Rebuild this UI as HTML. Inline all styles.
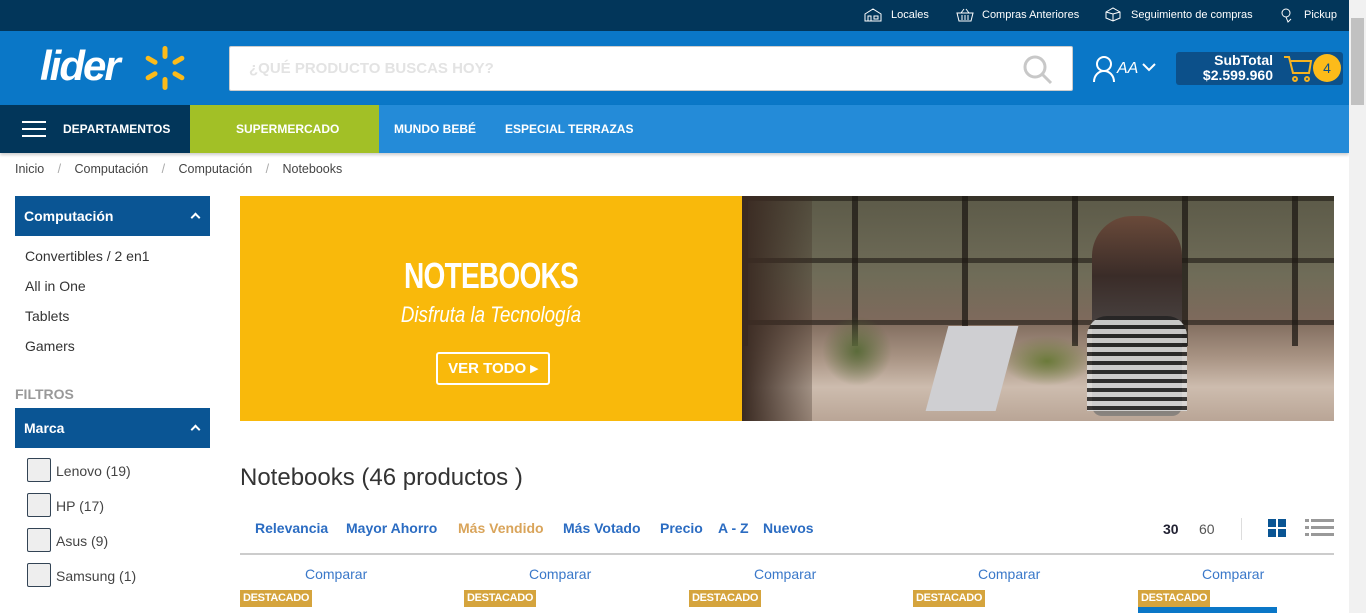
<!DOCTYPE html>
<html><head><meta charset="utf-8"><style>
*{box-sizing:border-box;margin:0;padding:0}
body{width:1366px;height:613px;overflow:hidden;font-family:"Liberation Sans",sans-serif;background:#fff;position:relative}
.a{position:absolute}
.top{left:0;top:0;width:1349px;height:31px;background:#02365a;color:#fff;font-size:11px}
.top span{position:absolute;top:9px}
.hdr{left:0;top:31px;width:1349px;height:74px;background:#0a77c7}
.nav{left:0;top:105px;width:1349px;height:48px;background:#248bd8;color:#fff;font-weight:bold;font-size:12px;box-shadow:0 2px 3px rgba(0,0,0,.2)}
.nav span{position:absolute;top:17px}
.sb{right:0;top:0;width:17px;height:613px;background:#f1f1f1}
.crumb{top:162px;font-size:12.5px;color:#444;word-spacing:1px}
.sh{left:15px;width:195px;height:40px;background:#0a5594;color:#fff;font-weight:bold;font-size:14px;padding:12px 9px}
.sh i{position:absolute;right:11px;top:18px;width:7px;height:7px;border-left:2px solid #fff;border-top:2px solid #fff;transform:rotate(45deg)}
.li{left:25px;font-size:14px;color:#333}
.cb{left:27px;width:24px;height:24px;border:1px solid #345;border-radius:2px;background:#eee}
.cl{left:56px;font-size:14px;color:#444}
.sort{top:520px;font-size:14px;font-weight:bold;color:#2b6cc2}
.cmp{top:566px;font-size:14px;color:#3a78c9}
.dst{top:590px;height:17px;background:#d5a43d;color:#fff;font-size:11px;font-weight:bold;padding:2px 3px;letter-spacing:-.3px}
</style></head><body>
<div class="a top">
<svg class="a" style="left:864px;top:8px" width="18" height="14" viewBox="0 0 18 14" fill="none" stroke="#fff" stroke-width="1"><path d="M1 6L9 1l8 5v7H1z M4 8h3v5H4z M10 8h4v3h-4z"/></svg>
<span style="left:891px">Locales</span>
<svg class="a" style="left:956px;top:8px" width="18" height="14" viewBox="0 0 18 14" fill="none" stroke="#fff"><path d="M1 5h16l-2 8H3z M5 5L8 1 M13 5l-3-4 M6 7v5 M9 7v5 M12 7v5"/></svg>
<span style="left:982px">Compras Anteriores</span>
<svg class="a" style="left:1104px;top:7px" width="18" height="15" viewBox="0 0 18 15" fill="none" stroke="#fff"><path d="M2 5l7-4 7 4v6l-7 3-7-3z M9 7v7 M2 5l7 2 7-2"/></svg>
<span style="left:1131px">Seguimiento de compras</span>
<svg class="a" style="left:1280px;top:7px" width="14" height="16" viewBox="0 0 14 16" fill="none" stroke="#fff"><circle cx="6" cy="6" r="4"/><path d="M6 10l2 5 3-3"/></svg>
<span style="left:1304px">Pickup</span>
</div>
<div class="a hdr">
<div class="a" style="left:40px;top:11px;color:#fff;font-size:42px;font-style:italic;font-weight:bold;letter-spacing:-2px">lider</div>
<svg class="a" style="left:140px;top:12px" width="50" height="50" viewBox="-25 -25 50 50"><g fill="#fcbb1a"><rect x="-2.5" y="-22" width="5" height="13" rx="2.5"/><rect x="-2.5" y="-22" width="5" height="13" rx="2.5" transform="rotate(60)"/><rect x="-2.5" y="-22" width="5" height="13" rx="2.5" transform="rotate(120)"/><rect x="-2.5" y="-22" width="5" height="13" rx="2.5" transform="rotate(180)"/><rect x="-2.5" y="-22" width="5" height="13" rx="2.5" transform="rotate(240)"/><rect x="-2.5" y="-22" width="5" height="13" rx="2.5" transform="rotate(300)"/></g></svg>
<div class="a" style="left:229px;top:15px;width:844px;height:45px;background:#fff;border:1px solid #ccc;border-radius:2px"><span class="a" style="left:19px;top:13px;font-size:15px;font-weight:bold;color:#e3e3e3">¿QUÉ PRODUCTO BUSCAS HOY?</span>
<svg class="a" style="left:792px;top:7px" width="32" height="32" viewBox="0 0 32 32" fill="none" stroke="#c8c8c8" stroke-width="3"><circle cx="13" cy="13" r="10"/><path d="M20 20l9 9"/></svg></div>
<svg class="a" style="left:1092px;top:24px" width="24" height="28" viewBox="0 0 24 28" fill="none" stroke="#fff" stroke-width="2"><circle cx="12" cy="9" r="7"/><path d="M2 27c0-7 5-11 10-11s10 4 10 11"/></svg>
<span class="a" style="left:1117px;top:29px;color:#fff;font-size:16px;font-style:italic">AA</span>
<svg class="a" style="left:1142px;top:32px" width="14" height="9" viewBox="0 0 14 9" fill="none" stroke="#fff" stroke-width="2"><path d="M1 1l6 6 6-6"/></svg>
<div class="a" style="left:1176px;top:21px;width:167px;height:33px;background:#0c508a;border-radius:3px"></div>
<div class="a" style="left:1195px;top:22px;width:78px;color:#fff;font-weight:bold;font-size:14px;text-align:right;line-height:15px">SubTotal<br>$2.599.960</div>
<svg class="a" style="left:1283px;top:24px" width="30" height="28" viewBox="0 0 30 28" fill="none" stroke="#f7b31f" stroke-width="2"><path d="M1 2h5l4 16h16l2-12H8"/><circle cx="12" cy="24" r="2"/><circle cx="24" cy="24" r="2"/></svg>
<div class="a" style="left:1313px;top:23px;width:28px;height:28px;border-radius:50%;background:#fcbb1a;color:#0c508a;font-size:14px;text-align:center;line-height:28px">4</div>
</div>
<div class="a nav">
<div class="a" style="left:0;top:0;width:190px;height:48px;background:#02365a"></div>
<div class="a" style="left:22px;top:16px;width:24px;height:2px;background:#fff;box-shadow:0 7px #fff,0 14px #fff"></div>
<span style="left:63px">DEPARTAMENTOS</span>
<div class="a" style="left:190px;top:0;width:189px;height:48px;background:#a2c026"></div>
<span style="left:236px">SUPERMERCADO</span>
<span style="left:394px">MUNDO BEBÉ</span>
<span style="left:505px">ESPECIAL TERRAZAS</span>
</div>
<div class="a sb"><div class="a" style="left:2px;top:18px;width:13px;height:87px;background:#c1c1c1"></div></div>
<span class="a crumb" style="left:15px">Inicio &nbsp;&nbsp;<span style="color:#aaa">/</span>&nbsp;&nbsp; Computación &nbsp;&nbsp;<span style="color:#aaa">/</span>&nbsp;&nbsp; Computación &nbsp;&nbsp;<span style="color:#aaa">/</span>&nbsp;&nbsp; Notebooks</span>
<div class="a sh" style="top:196px">Computación<i></i></div>
<span class="a li" style="top:248px">Convertibles / 2 en1</span>
<span class="a li" style="top:278px">All in One</span>
<span class="a li" style="top:308px">Tablets</span>
<span class="a li" style="top:338px">Gamers</span>
<span class="a" style="left:15px;top:386px;font-size:14px;font-weight:bold;color:#999">FILTROS</span>
<div class="a sh" style="top:408px">Marca<i></i></div>
<div class="a cb" style="top:458px"></div><span class="a cl" style="top:463px">Lenovo (19)</span>
<div class="a cb" style="top:493px"></div><span class="a cl" style="top:498px">HP (17)</span>
<div class="a cb" style="top:528px"></div><span class="a cl" style="top:533px">Asus (9)</span>
<div class="a cb" style="top:563px"></div><span class="a cl" style="top:568px">Samsung (1)</span>
<div class="a" style="left:240px;top:196px;width:502px;height:225px;background:#f9b90b"></div>
<div class="a" style="left:742px;top:196px;width:592px;height:225px;overflow:hidden;background:linear-gradient(180deg,#5c5a48 0%,#6f6c58 35%,#7e6a5c 55%,#a99484 72%,#cdbcae 85%,#b9a596 100%)">
<div class="a" style="left:0;top:0;width:592px;height:150px;background:repeating-linear-gradient(90deg,rgba(30,25,20,.75) 0 6px,rgba(0,0,0,0) 6px 110px)"></div>
<div class="a" style="left:0;top:0;width:592px;height:150px;background:repeating-linear-gradient(180deg,rgba(30,25,20,.6) 0 5px,rgba(0,0,0,0) 5px 62px)"></div>
<div class="a" style="left:0;top:0;width:70px;height:225px;background:linear-gradient(90deg,#3a2a22,rgba(60,45,35,.3))"></div>
<div class="a" style="left:80px;top:120px;width:70px;height:70px;border-radius:50%;background:radial-gradient(#5b6b3a,rgba(80,90,50,0) 70%)"></div>
<div class="a" style="left:260px;top:140px;width:90px;height:50px;border-radius:50%;background:radial-gradient(#6b7a3a,rgba(80,90,50,0) 70%)"></div>
<div class="a" style="left:195px;top:130px;width:70px;height:85px;background:#cfcfd2;transform:skewX(-15deg)"></div>
<div class="a" style="left:350px;top:20px;width:90px;height:200px;background:linear-gradient(180deg,#6a4a3a 0%,#3a2c28 30%,#4b4645 60%,#8a8580 100%);border-radius:40px 40px 10px 10px"></div>
<div class="a" style="left:345px;top:120px;width:100px;height:95px;background:repeating-linear-gradient(180deg,#222 0 4px,#ddd 4px 9px);border-radius:20px 20px 0 0;opacity:.85"></div>
</div>
<div class="a" style="left:240px;top:255px;width:502px;text-align:center;color:#fff;font-size:36px;font-weight:bold;transform:scaleX(.78);letter-spacing:-1px">NOTEBOOKS</div>
<div class="a" style="left:240px;top:302px;width:502px;text-align:center;color:#fff;font-size:22px;font-style:italic;transform:scaleX(.85)">Disfruta la Tecnología</div>
<div class="a" style="left:436px;top:352px;width:114px;height:33px;border:2px solid #fff;border-radius:3px;color:#fff;font-weight:bold;font-size:15px;text-align:center;line-height:29px">VER TODO ▸</div>
<span class="a" style="left:240px;top:464px;font-size:24px;color:#333">Notebooks (46 productos )</span>
<span class="a sort" style="left:255px">Relevancia</span>
<span class="a sort" style="left:346px">Mayor Ahorro</span>
<span class="a sort" style="left:458px;color:#d9a45a">Más Vendido</span>
<span class="a sort" style="left:563px">Más Votado</span>
<span class="a sort" style="left:660px">Precio</span>
<span class="a sort" style="left:718px">A - Z</span>
<span class="a sort" style="left:763px">Nuevos</span>
<span class="a" style="left:1163px;top:521px;font-size:14px;font-weight:bold;color:#223">30</span>
<span class="a" style="left:1199px;top:521px;font-size:14px;color:#555">60</span>
<div class="a" style="left:1241px;top:518px;width:1px;height:22px;background:#ddd"></div>
<svg class="a" style="left:1268px;top:519px" width="18" height="18"><rect x="0" y="0" width="8" height="8" fill="#0a5594"/><rect x="10" y="0" width="8" height="8" fill="#0a5594"/><rect x="0" y="10" width="8" height="8" fill="#0a5594"/><rect x="10" y="10" width="8" height="8" fill="#0a5594"/></svg>
<svg class="a" style="left:1305px;top:519px" width="29" height="17" fill="#999"><rect x="0" y="0" width="4" height="3"/><rect x="6" y="0" width="23" height="3"/><rect x="0" y="7" width="4" height="3"/><rect x="6" y="7" width="23" height="3"/><rect x="0" y="14" width="4" height="3"/><rect x="6" y="14" width="23" height="3"/></svg>
<div class="a" style="left:240px;top:553px;width:1094px;height:2px;background:#ccc"></div>
<span class="a cmp" style="left:305px">Comparar</span>
<span class="a cmp" style="left:529px">Comparar</span>
<span class="a cmp" style="left:754px">Comparar</span>
<span class="a cmp" style="left:978px">Comparar</span>
<span class="a cmp" style="left:1202px">Comparar</span>
<span class="a dst" style="left:240px">DESTACADO</span>
<span class="a dst" style="left:464px">DESTACADO</span>
<span class="a dst" style="left:689px">DESTACADO</span>
<span class="a dst" style="left:913px">DESTACADO</span>
<span class="a dst" style="left:1138px">DESTACADO</span>
<div class="a" style="left:1138px;top:607px;width:139px;height:6px;background:#0a77c7"></div>
</body></html>
